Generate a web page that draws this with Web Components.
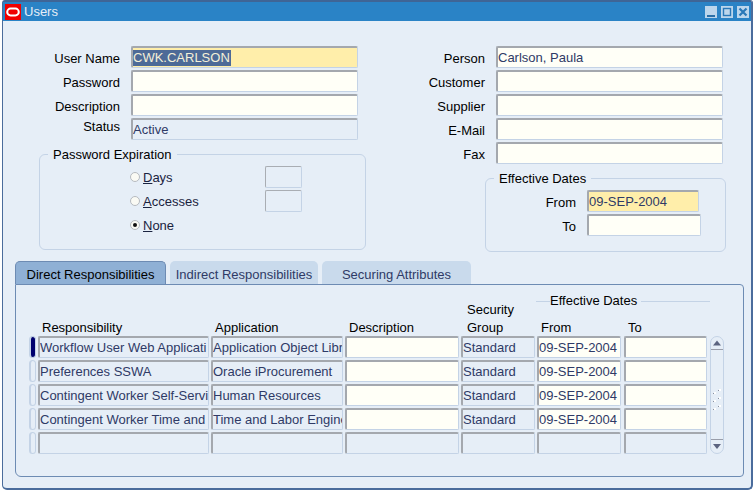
<!DOCTYPE html>
<html><head><meta charset="utf-8">
<style>
html,body{margin:0;padding:0;background:#fff;}
body{font:13px/16px "Liberation Sans",Arial,sans-serif;color:#000;padding-left:2px;}
u{text-underline-offset:1px;}
</style></head><body>
<ora-window title-text="Users">
  <ora-top>
    <div slot="left">
      <ora-row label="User Name"><ora-field variant="req"><ora-sel>CWK.CARLSON</ora-sel></ora-field></ora-row>
      <ora-row label="Password"><ora-field></ora-field></ora-row>
      <ora-row label="Description"><ora-field></ora-field></ora-row>
      <ora-row label="Status" raised><ora-field variant="ro">Active</ora-field></ora-row>
      <ora-group legend="Password Expiration" kind="exp">
        <ora-radio-row has-box><ora-radio><u>D</u>ays</ora-radio></ora-radio-row>
        <ora-radio-row has-box><ora-radio><u>A</u>ccesses</ora-radio></ora-radio-row>
        <ora-radio-row><ora-radio checked><u>N</u>one</ora-radio></ora-radio-row>
      </ora-group>
    </div>
    <div slot="right">
      <ora-row label="Person"><ora-field>Carlson, Paula</ora-field></ora-row>
      <ora-row label="Customer"><ora-field></ora-field></ora-row>
      <ora-row label="Supplier"><ora-field></ora-field></ora-row>
      <ora-row label="E-Mail"><ora-field></ora-field></ora-row>
      <ora-row label="Fax"><ora-field></ora-field></ora-row>
      <ora-group legend="Effective Dates" kind="dates">
        <ora-row label="From" style="--fw:112px"><ora-field variant="req">09-SEP-2004</ora-field></ora-row>
        <ora-row label="To" style="--fw:114px"><ora-field></ora-field></ora-row>
      </ora-group>
    </div>
  </ora-top>
  <ora-tabs>
    <ora-tab active style="--w:151px">Direct Responsibilities</ora-tab>
    <ora-tab style="--w:148px">Indirect Responsibilities</ora-tab>
    <ora-tab style="--w:149px">Securing Attributes</ora-tab>
  </ora-tabs>
  <ora-panel>
    <ora-resp-table></ora-resp-table>
  </ora-panel>
</ora-window>
<script>
function def(name, css, html, init){
  customElements.define(name, class extends HTMLElement{
    constructor(){super();const r=this.attachShadow({mode:'open'});
      r.innerHTML='<style>'+css+'</style>'+(typeof html==='function'?html(this):html);}
    connectedCallback(){ if(init&&!this._i){this._i=1;init(this);} }
  });
}
def('ora-window',`
  :host{display:block;box-sizing:border-box;width:751px;height:490px;background:#e6eef7;
    border:solid #4a6c9c;border-width:2px 2px 2px 1px;border-top-color:#3f6596;border-radius:3px 3px 5px 5px;}
  .bar{height:19px;background:#2a83c6;display:flex;align-items:center;padding:0 2px 0 2px;color:#e6eef7;}
  .logo{width:16px;height:16px;background:#f00000;display:flex;align-items:center;justify-content:center;margin-right:3px;}
  .t{flex:1;font-size:13px;line-height:18px;}
  .btns{display:flex;gap:4px;}
  svg{display:block;}
`,()=>`<div class="bar">
  <div class="logo"><svg width="14" height="10" viewBox="0 0 14 10"><rect x="1.2" y="1.6" width="11.6" height="6.8" rx="3.4" fill="none" stroke="#fff" stroke-width="2"/></svg></div>
  <span class="t">Users</span>
  <div class="btns">
    <svg width="12" height="12" viewBox="0 0 12 12"><rect width="12" height="12" fill="#bcd6ec"/><rect x="2" y="9" width="8" height="2" fill="#2a6fa8"/></svg>
    <svg width="12" height="12" viewBox="0 0 12 12"><rect width="12" height="12" fill="#bcd6ec"/><rect x="2.5" y="2.5" width="7" height="7" fill="none" stroke="#2a78b8" stroke-width="1.4"/></svg>
    <svg width="12" height="12" viewBox="0 0 12 12"><rect width="12" height="12" fill="#bcd6ec"/><path d="M2.5 2.5l7 7M9.5 2.5l-7 7" stroke="#2a78b8" stroke-width="2.2"/></svg>
  </div></div><slot></slot>`);
def('ora-top',`
  :host{display:flex;padding-top:25px;}
  ::slotted([slot=left]){width:363px;--lw:117px;--fw:227px;}
  ::slotted([slot=right]){width:360px;--lw:119px;--fw:227px;}
`,`<slot name="left"></slot><slot name="right"></slot>`);
def('ora-row',`
  :host{display:grid;grid-template-columns:var(--lw) var(--fw);column-gap:11px;margin-bottom:2px;align-items:center;}
  .l{text-align:right;line-height:22px;padding-top:2px;height:20px;}
  :host([raised]) .l{padding-top:0;height:18px;line-height:18px;align-self:start;}
`,h=>`<span class="l">${h.getAttribute('label')}</span><slot></slot>`);
def('ora-field',`
  :host{display:block;box-sizing:border-box;height:22px;border:solid;border-width:2px 1px 1px 2px;
    border-color:#a4a8ae #c4d3e6 #c4d3e6 #a4a8ae;border-radius:2px;background:#fffff7;color:#2f3a66;
    padding:0;line-height:20px;white-space:nowrap;overflow:hidden;}
  :host([variant=req]){background:#ffeeaa;}
  :host([variant=ro]){background:#e6eef7;}
`,`<slot></slot>`);
def('ora-sel',`
  :host{display:inline-block;background:#4d6a97;color:#f4f0d8;height:16px;line-height:16px;margin-top:2px;padding-right:1px;vertical-align:top;}
`,`<slot></slot>`);
def('ora-group',`
  :host{display:block;}
  :host([kind=exp]){margin:6px 0 0 36px;width:327px;--pt:4px;--pb:11px;}
  :host([kind=dates]){margin:6px 0 0 119px;width:241px;--pt:4px;--pb:13px;--lw:90px;}
  fieldset{margin:0;box-sizing:border-box;width:100%;border:1px solid #c4d3e6;border-radius:6px;padding:var(--pt) 0 var(--pb) 0;min-width:0;}
  legend{padding:1px 5px 0;margin-left:8px;line-height:15px;}
`,h=>`<fieldset><legend>${h.getAttribute('legend')}</legend><slot></slot></fieldset>`);
def('ora-radio-row',`
  :host{display:flex;height:22px;margin-bottom:2px;padding-left:90px;align-items:center;}
  .b{box-sizing:border-box;margin-left:auto;margin-right:63px;width:37px;height:22px;border:solid;border-width:1px;border-color:#a9adb3 #c4d3e6 #c4d3e6 #a9adb3;border-radius:2px;}
`,h=>`<slot></slot>${h.hasAttribute('has-box')?'<span class="b"></span>':''}`);
def('ora-radio',`
  :host{display:flex;align-items:center;gap:3px;color:#1a2340;}
  svg{display:block;margin-top:-1px;}
  span{padding-top:1px;}
`,h=>`<svg width="10" height="10" viewBox="0 0 10 10"><circle cx="5" cy="5" r="4.5" fill="#fafaf4" stroke="#b5babf"/>${h.hasAttribute('checked')?'<circle cx="5" cy="5" r="2" fill="#111"/>':''}</svg><span><slot></slot></span>`);
def('ora-tabs',`
  :host{display:flex;gap:4px;margin:9px 0 0 12px;height:23px;}
`,`<slot></slot>`);
def('ora-tab',`
  :host{display:block;box-sizing:border-box;width:var(--w);height:23px;background:#c9daec;color:#2f3a66;text-align:center;line-height:27px;
    border-radius:5px 5px 0 0;}
  :host([active]){background:#8fb0d5;color:#000;border:solid #6d8bb3;border-width:1px 1px 0 1px;line-height:25px;}
`,`<slot></slot>`);
def('ora-panel',`
  :host{display:block;box-sizing:border-box;margin-left:12px;width:729px;height:193px;border:1px solid #6d8bb3;border-radius:0 4px 4px 6px;padding:6px 0 0 13px;}
`,`<slot></slot>`);
const rows=[
 ['Workflow User Web Applicati','Application Object Libr','Standard','09-SEP-2004'],
 ['Preferences SSWA','Oracle iProcurement','Standard','09-SEP-2004'],
 ['Contingent Worker Self-Servic','Human Resources','Standard','09-SEP-2004'],
 ['Contingent Worker Time and','Time and Labor Engine','Standard','09-SEP-2004'],
 ['','','','']];
def('ora-resp-table',`
  :host{display:grid;grid-template-columns:7px 171px 132px 114px 74px 84px 84px 14px;column-gap:2px;row-gap:2px;
    grid-template-rows:23px 18px repeat(5,22px);width:690px;}
  .h{line-height:18px;padding-left:4px;white-space:nowrap;margin:3px 0 -3px;}
  .eff{grid-column:6 / 9;grid-row:1;align-self:start;display:flex;align-items:center;line-height:18px;margin:1px 13px 0 -1px;}
  .eff i{height:1px;background:#c4d3e6;display:block;}
  .eff span{padding:0 4px 0 0;}
  .ind{box-sizing:border-box;height:22px;border:1px solid #c4d3e6;border-left:2px solid #c4d3e6;border-radius:4px;background:#e6eef7;}
  .ind.on{background:#00006e;border-color:#c4d3e6;}
  .sgh{grid-column:5;grid-row:1 / 3;align-self:end;line-height:18px;padding-left:6px;margin:3px 0 -3px;}
  ora-field.to{margin-left:1px;}
  ora-scroll{grid-column:8;grid-row:3 / 8;margin-left:1px;}
  .hd2{grid-row:2;}
`,()=>{
  let s=`<span class="eff"><i style="width:14px"></i><span>Effective Dates</span><i style="flex:1"></i></span>
  <span class="sgh">Security<br>Group</span>
  <span class="h hd2" style="grid-column:2">Responsibility</span>
  <span class="h hd2" style="grid-column:3">Application</span>
  <span class="h hd2" style="grid-column:4">Description</span>
  <span class="h hd2" style="grid-column:6">From</span>
  <span class="h hd2" style="grid-column:7;padding-left:5px">To</span>`;
  rows.forEach((r,i)=>{
    const v=i==4?'ro':'';
    s+=`<div class="ind${i==0?' on':''}" style="grid-column:1;grid-row:${i+3}"></div>
    <ora-field variant="ro" style="grid-column:2;grid-row:${i+3}">${r[0]}</ora-field>
    <ora-field variant="ro" style="grid-column:3;grid-row:${i+3}">${r[1]}</ora-field>
    <ora-field variant="${v}" style="grid-column:4;grid-row:${i+3}"></ora-field>
    <ora-field variant="ro" style="grid-column:5;grid-row:${i+3}">${r[2]}</ora-field>
    <ora-field variant="${v}" style="grid-column:6;grid-row:${i+3}">${r[3]}</ora-field>
    <ora-field class="to" variant="${v}" style="grid-column:7;grid-row:${i+3}"></ora-field>`;
  });
  return s+'<ora-scroll></ora-scroll>';
});
def('ora-scroll',`
  :host{display:flex;flex-direction:column;justify-content:space-between;box-sizing:border-box;height:118px;width:14px;border:1px solid #c4d3e6;border-radius:7px;}
  svg{display:block;}
  .m{flex:1;display:flex;align-items:center;justify-content:center;padding-top:12px;}
`,`<svg width="12" height="13" viewBox="0 0 12 13"><path d="M2 8.5h8L6 3.5z" fill="#5c6480"/><rect x="0" y="12" width="12" height="1" fill="#9a9eaa"/></svg>
<div class="m"><svg width="12" height="26" viewBox="0 0 12 26"><g fill="#8a90a0"><rect x="2" y="5" width="1" height="1"/><rect x="7" y="2" width="1" height="1"/><rect x="2" y="13" width="1" height="1"/><rect x="7" y="10" width="1" height="1"/><rect x="2" y="21" width="1" height="1"/><rect x="7" y="18" width="1" height="1"/></g><g fill="#fff"><rect x="3" y="4" width="2" height="2"/><rect x="8" y="1" width="2" height="2"/><rect x="3" y="12" width="2" height="2"/><rect x="8" y="9" width="2" height="2"/><rect x="3" y="20" width="2" height="2"/><rect x="8" y="17" width="2" height="2"/></g></svg></div>
<svg width="12" height="14" viewBox="0 0 12 14"><rect x="0" y="0" width="12" height="1" fill="#9a9eaa"/><path d="M2 5h8L6 10z" fill="#5c6480"/></svg>`);
</script>
</body></html>
